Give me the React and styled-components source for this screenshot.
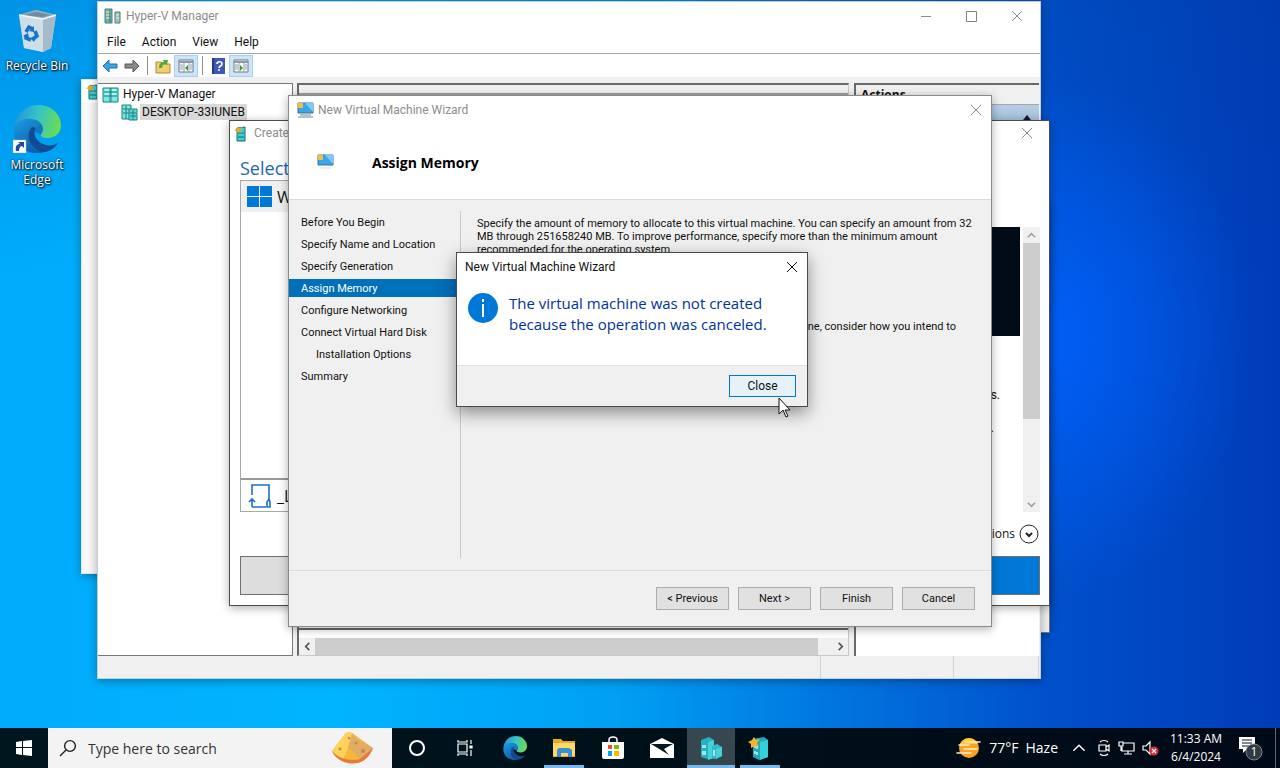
import React from 'react';
import styled, { createGlobalStyle } from 'styled-components';

const GlobalStyle = createGlobalStyle`
	*{
		box-sizing: border-box;
	}
	body{
		margin: 0;
		overflow: hidden;
		font-family: "Open Sans", "Noto Sans", sans-serif;
		font-size: 12px;
		line-height: 16px;
		color: #111111;
	}
	button{
		font: inherit;
		color: inherit;
		border: 0;
		padding: 0;
		background: none;
	}
	svg{
		display: block;
		flex-shrink: 0;
	}
	h1, h2, p, ul{
		margin: 0;
		padding: 0;
		list-style: none;
	}
`

const Screen = styled.div`
	display: flex;
	flex-direction: column;
	height: 100vh;
	background:
		radial-gradient(ellipse 200px 260px at 82% 44%, rgba(0,98,255,0.85), rgba(0,90,240,0) 100%),
		linear-gradient(180deg, rgba(0,60,150,0.22) 0%, rgba(0,60,150,0) 36%),
		linear-gradient(90deg, #00acfc 0%, #00b4ff 26%, #00a0f4 48%, #0078e0 64%, #0050cc 82%, #003cb8 100%);
`

const Desktop = styled.main`
	position: relative;
	flex: 1;
	overflow: hidden;
`

const Shortcuts = styled.div`
	display: flex;
	flex-direction: column;
	width: 74px;
	padding-top: 6px;
	gap: 32px;
`

const Shortcut = styled.button`
	display: flex;
	flex-direction: column;
	align-items: center;
	gap: 4px;
	line-height: 15px;
	color: #ffffff;
	text-shadow: 1px 1px 2px #000000, 0 0 2px #000000;
`

const Window = styled.section`
	position: absolute;
	display: flex;
	flex-direction: column;
	left: ${p => p.$x}px;
	top: ${p => p.$y}px;
	width: ${p => p.$w}px;
	height: ${p => p.$h}px;
	font-family: Roboto, "Open Sans", sans-serif;
	background: ${p => p.$bg || '#ffffff'};
	border: 1px solid ${p => p.$edge || '#777777'};
	box-shadow: ${p => p.$raised ? '0 6px 16px rgba(0,0,0,0.42)' : '0 2px 9px rgba(0,0,0,0.32)'};
	overflow: hidden;
`

const TitleBar = styled.header`
	display: flex;
	align-items: center;
	flex-shrink: 0;
	height: ${p => p.$h || 28}px;
	padding: ${p => p.$pad || '0 8px'};
	gap: ${p => p.$gap || 5}px;
	background: #ffffff;
	color: ${p => p.$active ? '#111111' : '#8c8c8c'};
	h2{
		flex: 1;
		font-size: 12px;
		font-weight: 400;
	}
`

const Caption = styled.button`
	display: flex;
	align-items: center;
	justify-content: center;
	width: ${p => p.$w || 14}px;
	height: 20px;
`

const MenuBar = styled.nav`
	display: flex;
	height: 24px;
	padding: 0 9px;
	gap: 16px;
	border-bottom: 1px solid #a8a8a8;
`

const ToolBar = styled.div`
	display: flex;
	align-items: center;
	height: 23px;
	padding: 0 1px;
`

const Tool = styled.button`
	display: flex;
	align-items: center;
	justify-content: center;
	width: ${p => p.$on ? 24 : 22}px;
	height: 22px;
	background: ${p => p.$on ? '#cce4f7' : 'none'};
	border: ${p => p.$on ? '1px solid #a9d0f0' : '0'};
`

const ToolRule = styled.span`
	width: 1px;
	height: 19px;
	margin: 0 4px;
	background: #909090;
`

const Panes = styled.div`
	display: flex;
	flex: 1;
	gap: 4px;
	min-height: 0;
	padding: 6px 1px 0 0;
	background: #f0f0f0;
`

const Tree = styled.ul`
	width: 195px;
	padding-top: 1px;
	background: #ffffff;
	border: 1px solid #777777;
	border-left: 0;
	li{
		display: flex;
		align-items: center;
		height: 18px;
		padding-left: 4px;
		gap: 4px;
	}
	li + li{
		padding-left: 23px;
		gap: 2px;
	}
`

const Selected = styled.span`
	padding: 0 2px;
	background: #d9d9d9;
`

const ListPane = styled.div`
	display: flex;
	flex-direction: column;
	flex: 1;
	background: #ffffff;
	border: 1px solid #c8c8c8;
	border-top: 2px solid #696969;
	border-left: 2px solid #696969;
`

const ListHead = styled.div`
	flex: 1;
	margin-bottom: 8px;
	border-top: 8px solid #f0f0f0;
	border-bottom: 2px solid #696969;
	box-shadow: inset 0 2px #a0a0a0;
`

const ActionsPane = styled.aside`
	width: 185px;
	margin-left: 1px;
	background: #ffffff;
	border-top: 2px solid #696969;
	border-left: 2px solid #696969;
	h2{
		height: 20px;
		padding-left: 5px;
		font-family: "Open Sans", sans-serif;
		font-size: 12px;
		line-height: 20px;
		background: #f0f0f0;
		border-bottom: 1px solid #a8a8a8;
	}
`

const ActionsGroup = styled.div`
	display: flex;
	justify-content: flex-end;
	height: 22px;
	padding: 9px 8px;
	background: linear-gradient(#b4cfe6, #9dbbd8);
`

const StatusBar = styled.footer`
	display: flex;
	justify-content: flex-end;
	height: 22px;
	padding-right: 1px;
	background: #f0f0f0;
	span{
		border-left: 1px solid #d4d4d4;
	}
	span:first-child{
		width: 133px;
	}
	span:last-child{
		width: 86px;
		border-right: 1px solid #d4d4d4;
	}
`

const ScrollTrack = styled.div`
	display: flex;
	align-items: center;
	flex-direction: row;
	height: 17px;
	background: #f0f0f0;
	button{
		display: flex;
		align-items: center;
		justify-content: center;
		width: 16px;
		height: 16px;
	}
`

const SideTrack = styled(ScrollTrack)`
	flex-direction: column;
	grid-column: 3;
	grid-row: 3;
	height: auto;
`

const ScrollThumb = styled.div`
	flex: ${p => p.$size};
	align-self: stretch;
	background: #cdcdcd;
`

const ScrollRest = styled.div`
	flex: ${p => p.$size};
`

const CreateBody = styled.div`
	display: grid;
	grid-template-columns: 1fr 190px 17px;
	grid-template-rows: 35px 47px 285px 44px 39px;
	column-gap: 3px;
	flex: 1;
	padding: 0 9px 0 10px;
	h1{
		grid-column: 1 / -1;
		padding-top: 11px;
		font-family: "Open Sans", sans-serif;
		font-size: 18px;
		line-height: 24px;
		font-weight: 400;
		color: #1e66b4;
	}
`

const Gallery = styled.div`
	display: flex;
	flex-direction: column;
	grid-column: 1;
	grid-row: 2 / 4;
	border: 1px solid #a8a8a8;
	font-family: "Open Sans", sans-serif;
	font-size: 16px;
`

const GalleryItem = styled.button`
	display: flex;
	align-items: center;
	height: ${p => p.$last ? 33 : 31}px;
	padding-left: 6px;
	gap: 4px;
	background: ${p => p.$on ? '#efefef' : '#ffffff'};
	border-top: ${p => p.$last ? '2px solid #999999' : '0'};
	margin-top: ${p => p.$last ? 'auto' : '0'};
`

const Details = styled.div`
	grid-column: 2;
	grid-row: 3;
	font-size: 12px;
	text-align: right;
	p{
		padding: 51px 20px 0 0;
	}
	p + p{
		padding: 17px 26px 0 0;
	}
`

const Preview = styled.div`
	height: 109px;
	background: #020c18;
`

const MoreOptions = styled.button`
	display: flex;
	align-items: center;
	justify-content: flex-end;
	grid-column: 1 / -1;
	grid-row: 4;
	gap: 4px;
	padding-right: 1px;
	font-family: "Open Sans", sans-serif;
`

const CreateFooter = styled.div`
	display: flex;
	justify-content: space-between;
	grid-column: 1 / -1;
	grid-row: 5;
	button{
		width: 180px;
		background: #dddddd;
		border: 1px solid #707070;
	}
	button + button{
		background: #0078d7;
	}
`

const WizardHead = styled.div`
	display: flex;
	align-items: center;
	height: 76px;
	padding: 0 28px;
	gap: 38px;
	background: #ffffff;
	border-bottom: 1px solid #dcdcdc;
	h1{
		padding-top: 2px;
		font-family: "Open Sans", sans-serif;
		font-size: 14px;
		line-height: 16px;
		color: #000000;
	}
`

const WizardBody = styled.div`
	display: flex;
	flex: 1;
	padding: 11px 0 12px;
	font-size: 11px;
	line-height: 13px;
`

const Steps = styled.nav`
	display: flex;
	flex-direction: column;
	flex-shrink: 0;
	width: 172px;
	padding-top: 2px;
	gap: 4px;
	border-right: 1px solid #c8c8c8;
`

const Step = styled.button`
	height: 18px;
	padding-left: ${p => p.$sub ? 27 : 12}px;
	text-align: left;
	color: ${p => p.$on ? '#ffffff' : '#111111'};
	background: ${p => p.$on ? '#0070bb' : 'none'};
`

const WizardText = styled.div`
	flex: 1;
	min-width: 0;
	padding: 6px 16px;
	white-space: nowrap;
	p + p{
		padding: 64px 19px 0 0;
		text-align: right;
	}
`

const WizardFooter = styled.footer`
	display: flex;
	justify-content: flex-end;
	height: 56px;
	padding: 16px;
	gap: 9px;
	border-top: 1px solid #dcdcdc;
	font-size: 11px;
`

const PushButton = styled.button`
	width: ${p => p.$focus ? 67 : 73}px;
	height: ${p => p.$focus ? 22 : 23}px;
	background: ${p => p.$focus ? '#e5f1fb' : '#e1e1e1'};
	border: 1px solid ${p => p.$focus ? '#0078d7' : '#adadad'};
`

const Message = styled.div`
	display: flex;
	flex: 1;
	gap: 11px;
	padding: 12px 11px;
	p{
		font-family: "Open Sans", sans-serif;
		font-size: 15px;
		line-height: 21px;
		color: #003399;
		white-space: nowrap;
	}
`

const MessageFooter = styled.footer`
	display: flex;
	justify-content: flex-end;
	height: 41px;
	padding: 9px 11px;
	background: #f0f0f0;
	border-top: 1px solid #dfdfdf;
`

const Pointer = styled.svg`
	position: absolute;
	left: 778px;
	top: 397px;
`

const TaskBar = styled.footer`
	display: flex;
	align-items: stretch;
	height: 40px;
	color: #ffffff;
	background: linear-gradient(90deg, #00161f, #001019 55%, #000917);
`

const TaskButton = styled.button`
	display: flex;
	align-items: center;
	justify-content: center;
	width: ${p => p.$w || 49}px;
	background: ${p => p.$active ? '#37474f' : 'none'};
	border-top: 3px solid transparent;
	border-bottom: 3px solid ${p => p.$open ? '#76b9ed' : 'transparent'};
`

const Running = styled.div`
	display: flex;
	padding-left: ${p => p.$left || 0}px;
	padding-right: ${p => p.$right || 0}px;
`

const Search = styled.label`
	display: flex;
	align-items: center;
	width: 344px;
	padding: 0 18px 0 11px;
	gap: 11px;
	background: #f3f3f3;
	input{
		flex: 1;
		min-width: 0;
		padding: 0;
		border: 0;
		outline: 0;
		background: none;
		font: 14px "Open Sans", sans-serif;
		color: #333333;
	}
	input::placeholder{
		color: #333333;
		opacity: 1;
	}
`

const Tray = styled.div`
	display: flex;
	align-items: center;
	margin-left: auto;
	gap: 7px;
`

const Weather = styled.button`
	display: flex;
	align-items: center;
	gap: 7px;
	margin-right: 7px;
	font-size: 14px;
`

const Overflow = styled.button`
	margin-right: 4px;
`

const Clock = styled.time`
	width: 60px;
	font-size: 12px;
	line-height: 18px;
	text-align: center;
`

const Notify = styled.button`
	margin-left: 5px;
`

const ShowDesktop = styled.button`
	align-self: stretch;
	width: 5px;
	margin-left: 4px;
	border-left: 1px solid #5c6670;
`

const Cross = ({ color = '#8c8c8c' }) => (
	<svg width="12" height="12" viewBox="0 0 12 12" stroke={color}>
		<path d="M1 1l10 10M11 1L1 11" />
	</svg>
)

const Chevron = ({ turn = 0, color = '#505050', size = 9, weight = 1.8 }) => (
	<svg width={size} height={size} viewBox="0 0 10 10" fill="none" stroke={color} strokeWidth={weight}>
		<path d="M1 7l4-4 4 4" transform={`rotate(${turn} 5 5)`} />
	</svg>
)

const EdgeLogo = ({ size, link }) => (
	<svg width={size} height={size} viewBox="0 0 48 48">
		<defs>
			<linearGradient id={`top${size}`} x1="0" y1="0.3" x2="1" y2="0.5">
				<stop offset="0" stopColor="#1f93dc" />
				<stop offset="0.5" stopColor="#36c6c4" />
				<stop offset="1" stopColor="#6cdc50" />
			</linearGradient>
			<linearGradient id={`left${size}`} x1="0" y1="0" x2="0.6" y2="1">
				<stop offset="0" stopColor="#1b9de2" />
				<stop offset="1" stopColor="#0e5cae" />
			</linearGradient>
		</defs>
		<path d="M1 22C3 8 13 0 25 0c14 0 23 10 23 20 0 8-6 13-13 13-6 0-9-2-7-5 4-6-1-13-9-13C10 15 4 19 1 22z" fill={`url(#top${size})`} />
		<path d="M1 22c3-6 10-9 17-8 7 0 12 5 12 10 0 3-2 4-2 6-7-7-15 0-11 8 3 6 8 9 14 10C12 51-2 38 1 22z" fill={`url(#left${size})`} />
		<path d="M19 22c-7 8-3 20 8 25 8 1 14-3 18-9-8 5-19 2-23-7-1-3-1-6 1-8z" fill="#124b91" />
		{link && (
			<g>
				<path d="M0 35h13v13H0z" fill="#ffffff" stroke="#b0b0b0" strokeWidth="0.5" />
				<path d="M3 46c-1-5 1-7 4-7L5 37h6v6l-2-2c-2 0-3 2-3 5z" fill="#1b4a9c" />
			</g>
		)}
	</svg>
)

const RecycleBin = () => (
	<svg width="40" height="48" viewBox="0 0 40 48">
		<path d="M2 9l5 33 19 4 8-4 5-33-20-5z" fill="#bccfdb" />
		<path d="M2 9l17-5 20 5-13 4z" fill="#8fa9b8" />
		<path d="M7 9l12-3 14 3-8 2z" fill="#6e8b9e" />
		<path d="M26 13l13-4-5 33-8 4z" fill="#a3bbc9" />
		<path d="M2 9l24 4v33L7 42z" fill="#d3e2ea" opacity="0.8" />
		<path d="M2 9l24 4 13-4" fill="none" stroke="#f2f8fb" strokeWidth="1.5" />
		<g fill="none" stroke="#1674d1" strokeWidth="3.6">
			<path d="M9 26l3-5 4 2M18 25l2 5-4 3M14 34l-5-2v-3" />
		</g>
		<path d="M17 20v6l-5-1zM20 29l-3 7-4-4zM6 30l5-3 1 5z" fill="#1674d1" />
	</svg>
)

const Servers = () => (
	<svg width="17" height="17" viewBox="0 0 17 17">
		<path d="M1 2h15v14H1z" fill="#7ee6e4" stroke="#16807f" />
		<path d="M2 6h13M2 10h13" stroke="#16807f" />
		<path d="M3 4h4M10 4h4M3 8h4M10 8h4" stroke="#e0ffff" />
		<path d="M8 2v14M9 2v14" stroke="#16807f" strokeWidth="0.8" />
	</svg>
)

const Host = () => (
	<svg width="17" height="17" viewBox="0 0 17 17">
		<path d="M1 1h9v14H1z" fill="#7ee6e4" stroke="#16807f" />
		<path d="M8 5h8v11H8z" fill="#5cd6d8" stroke="#16807f" />
		<path d="M2 5h6M2 9h6M9 9h6M9 12h6M5 2v13M12 6v10" stroke="#16807f" />
	</svg>
)

const TitleServers = () => (
	<svg width="17" height="16" viewBox="0 0 17 16">
		<path d="M1 1h7v14H1z" fill="#6db5aa" stroke="#557d78" />
		<path d="M11 4h5v11h-5z" fill="#9cc4bc" stroke="#557d78" />
		<path d="M2 4h5M2 7h5M2 10h5M12 7h3M12 10h3" stroke="#e0f4ee" />
		<path d="M6 2v12" stroke="#3b6d66" />
	</svg>
)

const NewServer = () => (
	<svg width="14" height="17" viewBox="0 0 14 17">
		<path d="M3 3l8-1v14H3z" fill="#3fd0d4" stroke="#126b78" />
		<path d="M4 8h6M4 12h6" stroke="#126b78" />
		<path d="M4 1l1 2 4-1-3 3 2 3-4-1-2 2V6L0 5l3-1z" fill="#e8a92c" />
	</svg>
)

const MonitorIcon = ({ small }) => (
	<svg width="17" height="16" viewBox="0 0 17 16">
		<path d="M1 1h15v10H1z" fill="#39a5ea" stroke="#3f6f96" />
		<path d="M8 1h8v9z" fill="#7ccaf8" />
		<path d="M1 1h5v5H1z" fill="#efbf45" />
		<path d={small ? 'M3 14h11' : 'M3 13h11M1 15h15'} stroke={small ? '#cfdbe4' : '#6f8790'} />
	</svg>
)

const Arrow = ({ flip, color, edge }) => (
	<svg width="16" height="14" viewBox="0 0 16 14">
		<path d="M1 7l6-6v4h8v4H7v4z" fill={color} stroke={edge} transform={flip ? 'rotate(180 8 7)' : undefined} />
	</svg>
)

const FolderUp = () => (
	<svg width="16" height="16" viewBox="0 0 16 16">
		<path d="M1 4h5l2 2h7v9H1z" fill="#f0cf6c" stroke="#a88b3b" />
		<path d="M4 10c0-4 2-6 5-6L8 2l5 0-1 5-2-1c-2 0-3 2-3 4z" fill="#52a83f" />
	</svg>
)

const PaneIcon = ({ flip }) => (
	<svg width="16" height="14" viewBox="0 0 16 14">
		<path d="M1 1h14v12H1z" fill="#ffffff" stroke="#6d7785" />
		<path d="M1 3h14" stroke="#8d9aab" strokeWidth="2" />
		<path d="M6 4v9M11 4v9" stroke="#8d9aab" />
		<path d="M2 6h3M2 8h3M2 10h3M12 6h2M12 8h2M12 10h2" stroke="#8d9aab" />
		<path d={flip ? 'M7 6l3 3-3 3z' : 'M10 6L7 9l3 3z'} fill="#3a9a28" />
	</svg>
)

const HelpIcon = () => (
	<svg width="13" height="16" viewBox="0 0 13 16">
		<path d="M0 0h13v16H0z" fill="#3f58b8" />
		<path d="M0 0h2v16H0z" fill="#24388c" />
		<path d="M5 6c0-3 5-3 5 0 0 2-3 2-3 4M7 11v2" fill="none" stroke="#ffffff" strokeWidth="1.6" />
	</svg>
)

const WindowsLogo = () => (
	<svg width="26" height="26" viewBox="0 0 26 26" fill="#0078d7">
		<path d="M0 2h12v10H0zM13 2h12v10H13zM0 13h12v10H0zM13 13h12v10H13z" />
	</svg>
)

const StartLogo = () => (
	<svg width="16" height="16" viewBox="0 0 16 16" fill="#ffffff">
		<path d="M0 2l6-1v6H0zM7 1l9-1v7H7zM0 8h6v7l-6-1zM7 8h9v8l-9-1z" />
	</svg>
)

const LocalSource = () => (
	<svg width="26" height="26" viewBox="0 0 26 26" fill="none" stroke="#1d6fce" strokeWidth="1.6">
		<path d="M5 12V2h17v14M5 24h14M5 24v-8M2 19l3-3 3 3M20 24v-5l2-3 1 3v5z" />
	</svg>
)

const InfoIcon = () => (
	<svg width="30" height="30" viewBox="0 0 30 30">
		<circle cx="15" cy="15" r="15" fill="#0078d7" />
		<path d="M15 11v13M15 6v3" stroke="#ffffff" strokeWidth="2" />
	</svg>
)

const Cheese = () => (
	<svg width="42" height="32" viewBox="0 0 42 32">
		<path d="M0 19L13 2c2-2 5-2 7-1l21 15-13 13c-6 3-20 1-28-10z" fill="#f6b93c" />
		<path d="M13 2c3-2 6-2 8 0l-5 14-5 12C6 26 2 23 0 19z" fill="#ffd25a" />
		<path d="M20 1c4 8 14 10 21 15L28 29c-3-7-8-11-12-13z" fill="#e2ac66" />
		<path d="M0 19c8 9 20 10 28 8l13-11c-2 7-9 14-15 15C16 33 4 29 0 19z" fill="#e87a35" />
		<g fill="#c08c46">
			<circle cx="24" cy="11" r="1.6" />
			<circle cx="31" cy="19" r="2" />
			<circle cx="17" cy="6" r="1.3" />
			<circle cx="8" cy="17" r="1.4" />
		</g>
	</svg>
)

const SearchIcon = () => (
	<svg width="18" height="18" viewBox="0 0 18 18" fill="none" stroke="#222222" strokeWidth="1.4">
		<circle cx="11" cy="7" r="5.4" />
		<path d="M7 11l-6 6" />
	</svg>
)

const TaskView = () => (
	<svg width="18" height="18" viewBox="0 0 18 18" fill="none" stroke="#ffffff" strokeWidth="1.2">
		<path d="M1 5h9v8H1zM1 1v2h9V1M1 17v-2h9v2M14 1v4M14 11v6" />
		<path d="M13 7h2v2h-2z" fill="#ffffff" />
	</svg>
)

const Explorer = () => (
	<svg width="24" height="22" viewBox="0 0 24 22">
		<path d="M1 2h8l2 2h12v16H1z" fill="#e8a92c" />
		<path d="M1 6h22v13H1z" fill="#ffd766" />
		<path d="M5 20v-7l2-2h10l3 2v7h-4v-4H9v4z" fill="#3b8fd6" />
	</svg>
)

const Store = () => (
	<svg width="24" height="24" viewBox="0 0 24 24">
		<path d="M8 7V4c0-4 8-4 8 0v3" fill="none" stroke="#ffffff" strokeWidth="1.5" />
		<path d="M1 6h22v15c0 1-1 2-2 2H3c-1 0-2-1-2-2z" fill="#ffffff" />
		<path d="M7 9h4v4H7z" fill="#f25022" />
		<path d="M13 9h5v4h-5z" fill="#7fba00" />
		<path d="M7 15h4v5H7z" fill="#00a4ef" />
		<path d="M13 15h5v5h-5z" fill="#ffb900" />
	</svg>
)

const Mail = () => (
	<svg width="24" height="20" viewBox="0 0 24 20">
		<path d="M0 6l12-6 12 6v14H0z" fill="#ffffff" />
		<path d="M1 6h22l-9 5 5 6z" fill="#08161f" />
	</svg>
)

const HyperV = ({ fresh }) => (
	<svg width="24" height="24" viewBox="0 0 24 24">
		{fresh ? (
			<g>
				<path d="M5 3l11-2 4 3v17l-9 3-6-3z" fill="#20a9b8" />
				<path d="M12 6l8-2v17l-8 3z" fill="#36cfda" />
				<path d="M7 9v3M9 10v3M7 15v3M9 16v3" stroke="#e0ffff" strokeWidth="1.3" />
				<path d="M6 1l2 3 4-1-3 4 2 4-4-1-4 2V8L0 6l4-2z" fill="#f6b32b" />
			</g>
		) : (
			<g>
				<path d="M2 4l8-3 5 3v18l-7 1-6-2z" fill="#23b3c0" />
				<path d="M9 6l6-2v18l-6 2z" fill="#45d2da" />
				<path d="M13 10l5-2 5 3v9l-7 3-3-1z" fill="#2fbcc8" />
				<path d="M17 13l6-2v9l-6 3z" fill="#45d2da" />
				<path d="M4 9v3M6 9v3M4 15v4M6 15v4M15 14v6" stroke="#e0ffff" strokeWidth="1.3" />
			</g>
		)}
	</svg>
)

const HazeIcon = () => (
	<svg width="26" height="22" viewBox="0 0 26 22">
		<circle cx="13" cy="11" r="10" fill="#f7a325" />
		<path d="M4 7a10 10 0 0118 0z" fill="#ffc83d" />
		<path d="M3 8h10M10 5h14M1 16h14M8 12h13" stroke="#ffe9c2" strokeWidth="1.6" strokeLinecap="round" />
	</svg>
)

const MeetNow = () => (
	<svg width="14" height="18" viewBox="0 0 14 18" fill="none" stroke="#ffffff" strokeWidth="1.2">
		<path d="M2 6h7v6H2zM9 8l3-2v6l-3-2M3 3c2-2 6-2 8 0M3 15c2 2 6 2 8 0" />
	</svg>
)

const Network = () => (
	<svg width="17" height="16" viewBox="0 0 17 16" fill="none" stroke="#ffffff" strokeWidth="1.2">
		<path d="M5 3h11v8H4V7M10 11v3M6 14h8M1 2h4v4H1zM3 6v5" />
	</svg>
)

const Volume = () => (
	<svg width="17" height="16" viewBox="0 0 17 16">
		<path d="M1 6h3l4-4v12l-4-4H1z" fill="none" stroke="#ffffff" strokeWidth="1.2" />
		<circle cx="12" cy="11" r="4.5" fill="#e12b3d" />
		<path d="M10 9l4 4M14 9l-4 4" stroke="#ffffff" strokeWidth="1.2" />
	</svg>
)

const NotifyIcon = () => (
	<svg width="26" height="26" viewBox="0 0 26 26">
		<path d="M1 2h16v12H9l-4 4v-4H1z" fill="#ffffff" />
		<path d="M4 5h10M4 8h10M4 11h7" stroke="#08131d" />
		<circle cx="16" cy="17" r="8" fill="#2f3a42" stroke="#7b858c" />
		<text x="16" y="21" fontSize="12" textAnchor="middle" fill="#ffffff">1</text>
	</svg>
)

const steps = [
	{ name: 'Before You Begin' },
	{ name: 'Specify Name and Location' },
	{ name: 'Specify Generation' },
	{ name: 'Assign Memory', on: true },
	{ name: 'Configure Networking' },
	{ name: 'Connect Virtual Hard Disk' },
	{ name: 'Installation Options', sub: true },
	{ name: 'Summary' },
]

const ManagerWindow = () => (
	<Window $x={97} $y={1} $w={944} $h={678} $edge="#c4ced6">
		<TitleBar $gap={5} $pad="0 0 0 6px">
			<TitleServers />
			<h2>Hyper-V Manager</h2>
			<Caption $w={46} aria-label="Minimize">
				<svg width="10" height="10" viewBox="0 0 10 10" stroke="#8c8c8c"><path d="M0 5.500h10" /></svg>
			</Caption>
			<Caption $w={35} aria-label="Maximize">
				<svg width="11" height="11" viewBox="0 0 11 11" fill="none" stroke="#808080"><path d="M.5.5h10v10H.5z" /></svg>
			</Caption>
			<Caption $w={46} aria-label="Close"><Cross /></Caption>
		</TitleBar>
		<MenuBar>
			<button>File</button>
			<button>Action</button>
			<button>View</button>
			<button>Help</button>
		</MenuBar>
		<ToolBar>
			<Tool aria-label="Back"><Arrow color="#3fa3e0" edge="#1d6fb0" /></Tool>
			<Tool aria-label="Forward"><Arrow flip color="#8b8b8b" edge="#555555" /></Tool>
			<ToolRule />
			<Tool aria-label="Up"><FolderUp /></Tool>
			<Tool $on aria-label="Show tree"><PaneIcon /></Tool>
			<ToolRule />
			<Tool aria-label="Help"><HelpIcon /></Tool>
			<Tool $on aria-label="Show actions"><PaneIcon flip /></Tool>
		</ToolBar>
		<Panes>
			<Tree>
				<li><Servers />Hyper-V Manager</li>
				<li><Host /><Selected>DESKTOP-33IUNEB</Selected></li>
			</Tree>
			<ListPane>
				<ListHead />
				<ScrollTrack>
					<button aria-label="Scroll left"><Chevron turn={-90} /></button>
					<ScrollThumb $size={35} />
					<ScrollRest $size={1} />
					<button aria-label="Scroll right"><Chevron turn={90} /></button>
				</ScrollTrack>
			</ListPane>
			<ActionsPane>
				<h2>Actions</h2>
				<ActionsGroup>
					<svg width="8" height="6"><path d="M0 6l4-5 4 5z" fill="#101830" /></svg>
				</ActionsGroup>
			</ActionsPane>
		</Panes>
		<StatusBar><span /><span /></StatusBar>
	</Window>
)

const CreateWindow = () => (
	<Window $x={229} $y={120} $w={821} $h={486} $edge="#4c4c4c">
		<TitleBar $h={24} $gap={6} $pad="0 15px 0 4px">
			<NewServer />
			<h2>Create Virtual Machine</h2>
			<Caption aria-label="Close"><Cross /></Caption>
		</TitleBar>
		<CreateBody>
			<h1>Select</h1>
			<Gallery>
				<GalleryItem $on><WindowsLogo />Windows</GalleryItem>
				<GalleryItem $last><LocalSource />_L</GalleryItem>
			</Gallery>
			<Details>
				<Preview />
				<p>s.</p>
				<p>.</p>
			</Details>
			<SideTrack>
				<button aria-label="Scroll up"><Chevron color="#a0a0a0" /></button>
				<ScrollThumb $size={176} />
				<ScrollRest $size={77} />
				<button aria-label="Scroll down"><Chevron turn={180} color="#a0a0a0" /></button>
			</SideTrack>
			<MoreOptions>
				More options
				<svg width="20" height="20" viewBox="0 0 20 20" fill="none" stroke="#222222">
					<circle cx="10" cy="10" r="9" />
					<path d="M7 9l3 3 3-3" strokeWidth="2" />
				</svg>
			</MoreOptions>
			<CreateFooter>
				<button aria-label="Local installation" />
				<button aria-label="Create" />
			</CreateFooter>
		</CreateBody>
	</Window>
)

const WizardWindow = () => (
	<Window $x={288} $y={95} $w={704} $h={532} $bg="#f0f0f0" $edge="#8a8a8a">
		<TitleBar $gap={4}>
			<MonitorIcon />
			<h2>New Virtual Machine Wizard</h2>
			<Caption aria-label="Close"><Cross /></Caption>
		</TitleBar>
		<WizardHead>
			<MonitorIcon small />
			<h1>Assign Memory</h1>
		</WizardHead>
		<WizardBody>
			<Steps>
				{steps.map(step => (
					<Step key={step.name} $on={step.on} $sub={step.sub}>{step.name}</Step>
				))}
			</Steps>
			<WizardText>
				<p>
					Specify the amount of memory to allocate to this virtual machine. You can specify an amount from 32<br />
					MB through 251658240 MB. To improve performance, specify more than the minimum amount<br />
					recommended for the operating system.
				</p>
				<p>ne, consider how you intend to</p>
			</WizardText>
		</WizardBody>
		<WizardFooter>
			<PushButton>&lt; Previous</PushButton>
			<PushButton>Next &gt;</PushButton>
			<PushButton>Finish</PushButton>
			<PushButton>Cancel</PushButton>
		</WizardFooter>
	</Window>
)

const MessageWindow = () => (
	<Window $x={456} $y={252} $w={352} $h={155} $edge="#4a4a4a" $raised>
		<TitleBar $active>
			<h2>New Virtual Machine Wizard</h2>
			<Caption aria-label="Close"><Cross color="#111111" /></Caption>
		</TitleBar>
		<Message>
			<InfoIcon />
			<p>
				The virtual machine was not created<br />
				because the operation was canceled.
			</p>
		</Message>
		<MessageFooter>
			<PushButton $focus>Close</PushButton>
		</MessageFooter>
	</Window>
)

const App = () => {
	return (
		<Screen>
			<GlobalStyle />
			<Desktop>
				<Shortcuts>
					<Shortcut><RecycleBin />Recycle Bin</Shortcut>
					<Shortcut><EdgeLogo size={48} link /><span>Microsoft<br />Edge</span></Shortcut>
				</Shortcuts>
				<Window $x={400} $y={200} $w={650} $h={433} $bg="#f0f0f0" />
				<Window $x={81} $y={79} $w={600} $h={495} $bg="#f7f7f7" $edge="#e0e6ea">
					<TitleBar $h={23} $pad="0 4px"><NewServer /></TitleBar>
				</Window>
				<ManagerWindow />
				<CreateWindow />
				<WizardWindow />
				<MessageWindow />
				<Pointer width="13" height="21" viewBox="0 0 13 21">
					<path d="M1 1v16l4-4 3 7 2-1-3-6h5z" fill="#ffffff" stroke="#111111" />
				</Pointer>
			</Desktop>
			<TaskBar>
				<TaskButton $w={48} aria-label="Start"><StartLogo /></TaskButton>
				<Search>
					<SearchIcon />
					<input type="text" placeholder="Type here to search" aria-label="Type here to search" />
					<Cheese />
				</Search>
				<TaskButton aria-label="Cortana">
					<svg width="18" height="18" viewBox="0 0 18 18" fill="none" stroke="#ffffff" strokeWidth="2"><circle cx="9" cy="9" r="7" /></svg>
				</TaskButton>
				<TaskButton aria-label="Task view"><TaskView /></TaskButton>
				<TaskButton aria-label="Microsoft Edge"><EdgeLogo size={24} /></TaskButton>
				<Running $left={5} $right={4}>
					<TaskButton $w={40} $open aria-label="File Explorer"><Explorer /></TaskButton>
				</Running>
				<TaskButton aria-label="Store"><Store /></TaskButton>
				<TaskButton aria-label="Mail"><Mail /></TaskButton>
				<Running $left={1} $right={5}>
					<TaskButton $w={48} $open $active aria-label="Hyper-V Manager"><HyperV /></TaskButton>
				</Running>
				<TaskButton $w={40} $open aria-label="Create Virtual Machine"><HyperV fresh /></TaskButton>
				<Tray>
					<Weather><HazeIcon /><span>77°F</span><span>Haze</span></Weather>
					<Overflow aria-label="Show hidden icons"><Chevron color="#ffffff" size={14} weight={1} /></Overflow>
					<MeetNow />
					<Network />
					<Volume />
					<Clock>11:33 AM<br />6/4/2024</Clock>
					<Notify aria-label="Notifications"><NotifyIcon /></Notify>
					<ShowDesktop aria-label="Show desktop" />
				</Tray>
			</TaskBar>
		</Screen>
	);
}

export default App;
